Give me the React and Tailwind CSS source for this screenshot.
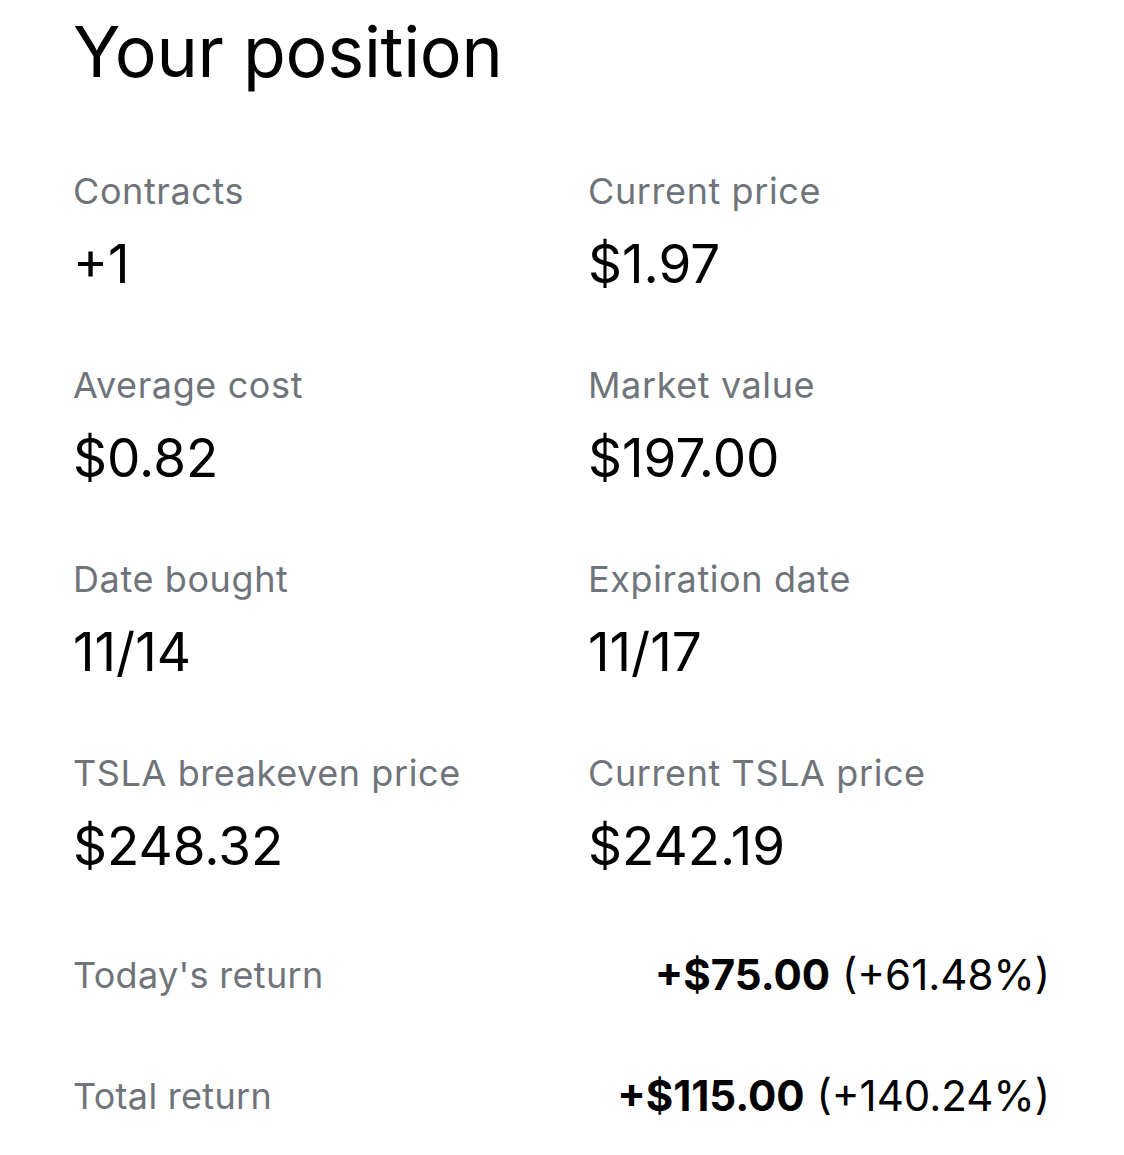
const rows = [
  [
    { label: 'Contracts', value: '+1' },
    { label: 'Current price', value: '$1.97' },
  ],
  [
    { label: 'Average cost', value: '$0.82' },
    { label: 'Market value', value: '$197.00' },
  ],
  [
    { label: 'Date bought', value: '11/14' },
    { label: 'Expiration date', value: '11/17' },
  ],
  [
    { label: 'TSLA breakeven price', value: '$248.32' },
    { label: 'Current TSLA price', value: '$242.19' },
  ],
];

const returns = [
  { label: "Today's return", amount: '+$75.00', pct: '(+61.48%)' },
  { label: 'Total return', amount: '+$115.00', pct: '(+140.24%)' },
];

function Stat({ label, value }) {
  return (
    <div className="flex flex-col">
      <div className="text-[36px] leading-[44px] tracking-[0.6px] text-[#6f747a]">{label}</div>
      <div className="mt-[19px] text-[53px] leading-[64px] text-black">{value}</div>
    </div>
  );
}

export default function App() {
  return (
    <div
      className="w-[1124px] h-[1155px] bg-white pl-[73px] pr-[74px] pt-[10px] overflow-hidden"
      style={{ fontFamily: 'Inter, "Noto Sans", sans-serif' }}
    >
      <h1 className="text-[70px] leading-[84px] text-black tracking-[-0.3px]">Your position</h1>

      <div className="mt-[75px] flex flex-col gap-[67px]">
        {rows.map((pair, i) => (
          <div key={i} className="grid grid-cols-[515px_1fr]">
            {pair.map(s => (
              <Stat key={s.label} {...s} />
            ))}
          </div>
        ))}
      </div>

      <div className="mt-[73px] flex flex-col gap-[75px]">
        {returns.map(r => (
          <div key={r.label} className="flex items-baseline justify-between">
            <span className="text-[36px] leading-[44px] tracking-[0.3px] text-[#6f747a]">{r.label}</span>
            <span className="text-[42px] leading-[44px] text-black translate-y-[2px]">
              <span className="font-bold">{r.amount}</span> {r.pct}
            </span>
          </div>
        ))}
      </div>
    </div>
  );
}
